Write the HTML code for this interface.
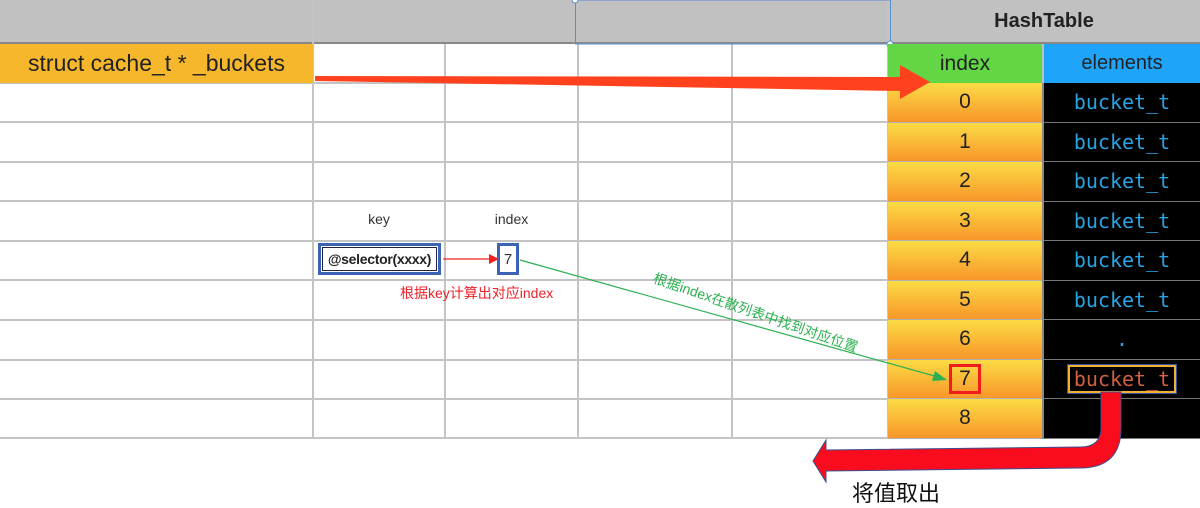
<!DOCTYPE html>
<html><head><meta charset="utf-8"><style>
*{box-sizing:border-box}
body{margin:0;width:1200px;height:507px;background:#fff;position:relative;overflow:hidden;font-family:"Liberation Sans","Noto Sans CJK SC",sans-serif}
.a{position:absolute}
.c{display:flex;align-items:center;justify-content:center}
.idx{background:linear-gradient(#fbdc45,#f8962a);border-bottom:1px solid #b0b0b0;font-size:21px;color:#222}
.el{background:#000;border-bottom:1px solid #777;font-family:"DejaVu Sans Mono","Liberation Mono",monospace;font-size:20px;color:#2aa3e0}
</style></head><body>
<div class="a" style="left:0;top:0;width:1200px;height:44px;background:#c0c1c0;border-bottom:2px solid #888"></div>
<svg class="a" style="left:0;top:0" width="1200" height="507">
<g stroke="#c4c4c4" stroke-width="2">
<line x1="313" y1="0" x2="313" y2="438"/><line x1="445" y1="44" x2="445" y2="438"/><line x1="578" y1="44" x2="578" y2="438"/><line x1="732" y1="44" x2="732" y2="438"/><line x1="888" y1="0" x2="888" y2="438"/>
<line x1="0" y1="83" x2="888" y2="83"/><line x1="0" y1="122" x2="888" y2="122"/><line x1="0" y1="162" x2="888" y2="162"/><line x1="0" y1="201" x2="888" y2="201"/><line x1="0" y1="241" x2="888" y2="241"/><line x1="0" y1="280" x2="888" y2="280"/><line x1="0" y1="320" x2="888" y2="320"/><line x1="0" y1="360" x2="888" y2="360"/><line x1="0" y1="399" x2="888" y2="399"/><line x1="0" y1="438" x2="888" y2="438"/>
</g>
<rect x="575.5" y="0" width="315" height="44" fill="none" stroke="#5a8fd8" stroke-width="1"/>
<circle cx="575" cy="0" r="3" fill="#fff" stroke="#5a8fd8"/>
<circle cx="890" cy="44" r="3" fill="#fff" stroke="#5a8fd8"/>
</svg>
<div class="a c" style="left:0;top:44px;width:313px;height:39px;background:#f6b72d;font-size:23px;color:#222">struct cache_t * _buckets</div>
<div class="a c" style="left:888px;top:0;width:312px;height:42px;font-weight:bold;font-size:20px;color:#222">HashTable</div>
<div class="a c" style="left:888px;top:44px;width:154px;height:39px;background:#62d645;font-size:21px;color:#222">index</div>
<div class="a c" style="left:1042px;top:44px;width:158px;height:39px;background:#1ea5f9;font-size:20px;color:#222;border-left:2px solid #c0c0c0">elements</div>
<div class="a" style="left:888px;top:83px;width:154px">
<div class="idx c" style="height:39.5px">0</div><div class="idx c" style="height:39.5px">1</div><div class="idx c" style="height:39.5px">2</div><div class="idx c" style="height:39.5px">3</div><div class="idx c" style="height:39.5px">4</div><div class="idx c" style="height:39.5px">5</div><div class="idx c" style="height:39.5px">6</div><div class="idx c" style="height:39.5px"><span style="border:3px solid #f31c1c;padding:0 7px;line-height:24px">7</span></div><div class="idx c" style="height:39.5px">8</div></div>
<div class="a" style="left:1042px;top:83px;width:158px;border-left:2px solid #888">
<div class="el c" style="height:39.5px">bucket_t</div><div class="el c" style="height:39.5px">bucket_t</div><div class="el c" style="height:39.5px">bucket_t</div><div class="el c" style="height:39.5px">bucket_t</div><div class="el c" style="height:39.5px">bucket_t</div><div class="el c" style="height:39.5px">bucket_t</div><div class="el c" style="height:39.5px">.</div><div class="el c" style="height:39.5px"><span style="border:2px solid #f0b030;outline:1px solid #3050a0;padding:0 4px;color:#d06040;line-height:24px">bucket_t</span></div><div class="el c" style="height:39.5px"></div></div>
<div class="a c" style="left:313px;top:205px;width:132px;height:28px;font-size:14px;color:#333">key</div>
<div class="a c" style="left:445px;top:205px;width:133px;height:28px;font-size:14px;color:#333">index</div>
<div class="a c" style="left:318px;top:243px;width:123px;height:32px;border:3px solid #3c64b4;outline:1px solid #224;outline-offset:-5px;font-weight:bold;font-size:14px;color:#222;letter-spacing:-0.3px">@selector(xxxx)</div>
<div class="a c" style="left:497px;top:243px;width:22px;height:32px;border:3px solid #3c64b4;font-size:15px;color:#333">7</div>
<div class="a" style="left:400px;top:283px;font-size:14px;color:#f0202a;white-space:nowrap">根据key计算出对应index</div>
<div class="a" style="left:657px;top:268px;font-size:14px;color:#2cb050;white-space:nowrap;transform-origin:0 0;transform:rotate(19deg)">根据index在散列表中找到对应位置</div>
<svg class="a" style="left:0;top:0" width="1200" height="507">
<line x1="443" y1="259" x2="490" y2="259" stroke="#f02020" stroke-width="1.2"/><polygon points="499,259 489,254 489,264" fill="#f02020"/>
<line x1="520" y1="260" x2="938" y2="377" stroke="#2cb050" stroke-width="1.2"/><polygon points="947,380 935,371 932,381" fill="#2cb050"/>
<polygon points="315,76 900,77 900,65 930,82 900,99 900,91 315,81" fill="#ff411e"/>
<path d="M1101,392 L1121,392 L1121,428 Q1121,468 1080,468 L826,471 L826,482 L813,461 L826,440 L826,450 L1080,447 Q1101,447 1101,428 Z" fill="#f80c1d" stroke="#3a5090" stroke-width="1"/>
</svg>
<div class="a" style="left:852px;top:476px;font-size:22px;color:#111">将值取出</div>
</body></html>
